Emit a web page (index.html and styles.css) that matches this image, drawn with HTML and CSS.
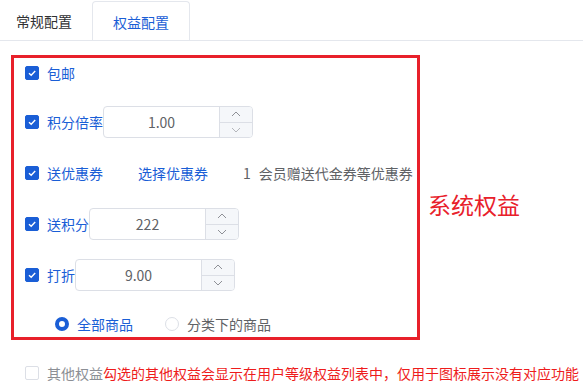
FILE: index.html
```html
<!DOCTYPE html>
<html lang="zh-CN">
<head>
<meta charset="utf-8">
<title>权益配置</title>
<link rel="stylesheet" href="styles.css">
</head>
<body>
<div class="tabs">
  <div class="tab">常规配置</div>
  <div class="tab active">权益配置</div>
</div>

<div class="main">
  <div class="sys-box">
    <div class="row row-first">
      <span class="cb checked"><svg viewBox="0 0 14 14" width="14" height="14"><path d="M4 7.2 L6.2 9.3 L10.2 5" fill="none" stroke="#fff" stroke-width="1.4"/></svg></span>
      <span class="lbl">包邮</span>
    </div>
    <div class="row">
      <span class="cb checked"><svg viewBox="0 0 14 14" width="14" height="14"><path d="M4 7.2 L6.2 9.3 L10.2 5" fill="none" stroke="#fff" stroke-width="1.4"/></svg></span>
      <span class="lbl">积分倍率</span>
      <div class="num">
        <span class="num-val">1.00</span>
        <span class="step">
          <span class="step-btn"><svg viewBox="0 0 10 6" width="10" height="6"><path d="M1 5 L5 1 L9 5" fill="none" stroke="#8e9096" stroke-width="1"/></svg></span>
          <span class="step-btn"><svg viewBox="0 0 10 6" width="10" height="6"><path d="M1 1 L5 5 L9 1" fill="none" stroke="#b4b6bb" stroke-width="1"/></svg></span>
        </span>
      </div>
    </div>
    <div class="row">
      <span class="cb checked"><svg viewBox="0 0 14 14" width="14" height="14"><path d="M4 7.2 L6.2 9.3 L10.2 5" fill="none" stroke="#fff" stroke-width="1.4"/></svg></span>
      <span class="lbl">送优惠券</span>
      <span class="link">选择优惠券</span>
      <span class="count">1</span>
      <span class="desc">会员赠送代金券等优惠券</span>
    </div>
    <div class="row">
      <span class="cb checked"><svg viewBox="0 0 14 14" width="14" height="14"><path d="M4 7.2 L6.2 9.3 L10.2 5" fill="none" stroke="#fff" stroke-width="1.4"/></svg></span>
      <span class="lbl">送积分</span>
      <div class="num">
        <span class="num-val">222</span>
        <span class="step">
          <span class="step-btn"><svg viewBox="0 0 10 6" width="10" height="6"><path d="M1 5 L5 1 L9 5" fill="none" stroke="#8e9096" stroke-width="1"/></svg></span>
          <span class="step-btn"><svg viewBox="0 0 10 6" width="10" height="6"><path d="M1 1 L5 5 L9 1" fill="none" stroke="#8e9096" stroke-width="1"/></svg></span>
        </span>
      </div>
    </div>
    <div class="row">
      <span class="cb checked"><svg viewBox="0 0 14 14" width="14" height="14"><path d="M4 7.2 L6.2 9.3 L10.2 5" fill="none" stroke="#fff" stroke-width="1.4"/></svg></span>
      <span class="lbl">打折</span>
      <div class="num num-wide">
        <span class="num-val">9.00</span>
        <span class="step">
          <span class="step-btn"><svg viewBox="0 0 10 6" width="10" height="6"><path d="M1 5 L5 1 L9 5" fill="none" stroke="#8e9096" stroke-width="1"/></svg></span>
          <span class="step-btn"><svg viewBox="0 0 10 6" width="10" height="6"><path d="M1 1 L5 5 L9 1" fill="none" stroke="#8e9096" stroke-width="1"/></svg></span>
        </span>
      </div>
    </div>
    <div class="row row-radio">
      <span class="radio on"></span>
      <span class="radio-lbl on-lbl">全部商品</span>
      <span class="radio"></span>
      <span class="radio-lbl">分类下的商品</span>
    </div>
  </div>
  <div class="note">系统权益</div>
</div>

<div class="row row-other">
  <span class="cb"></span>
  <span class="other-lbl">其他权益</span>
  <span class="warn">勾选的其他权益会显示在用户等级权益列表中，仅用于图标展示没有对应功能</span>
</div>
</body>
</html>
```

FILE: styles.css
```css
html, body {
  margin: 0;
  padding: 0;
  background: #fff;
  width: 583px;
  height: 384px;
  overflow: hidden;
}
body {
  font-family: "Noto Sans CJK SC", "Noto Sans", sans-serif;
  font-size: 14px;
  color: #606266;
}
.tabs {
  display: flex;
  padding-top: 1px;
  height: 39px;
  border-bottom: 1px solid #e4e7ed;
  margin-left: -4px;
}
.tab {
  height: 39px;
  line-height: 41px;
  padding: 0 20px;
  color: #303133;
  box-sizing: border-box;
}
.tab.active {
  color: #1a5ed6;
  border: 1px solid #e4e7ed;
  border-bottom: none;
  border-radius: 4px 4px 0 0;
}
.main {
  display: flex;
  align-items: flex-start;
  margin-top: 14px;
  margin-left: 11px;
}
.sys-box {
  width: 409px;
  height: 285px;
  box-sizing: border-box;
  border: 3px solid #e8202a;
  padding-left: 11px;
}
.note {
  margin-left: 8px;
  margin-top: 136px;
  font-size: 23px;
  line-height: 26px;
  color: #e8202a;
}
.row {
  display: flex;
  align-items: center;
  height: 32px;
  margin-top: 19px;
  white-space: nowrap;
}
.row-first {
  height: 29px;
  margin-top: 0;
}
.cb {
  width: 14px;
  height: 14px;
  box-sizing: border-box;
  border: 1px solid #dcdfe6;
  border-radius: 2px;
  background: #fff;
  flex: none;
  display: flex;
}
.cb.checked {
  background: #1a5ed6;
  border-color: #1a5ed6;
}
.cb svg {
  margin: -1px;
}
.lbl {
  margin-left: 8px;
  color: #1a5ed6;
  line-height: 20px;
}
.num {
  display: flex;
  width: 150px;
  height: 32px;
  box-sizing: border-box;
  border: 1px solid #dcdfe6;
  border-radius: 4px;
  overflow: hidden;
  flex: none;
}
.num-wide {
  width: 160px;
}
.num-val {
  flex: 1;
  text-align: center;
  line-height: 30px;
  color: #606266;
  font-size: 14px;
}
.step {
  width: 32px;
  display: flex;
  flex-direction: column;
  border-left: 1px solid #dcdfe6;
  background: #f5f7fa;
}
.step-btn {
  flex: 1;
  display: flex;
  align-items: center;
  justify-content: center;
}
.step-btn + .step-btn {
  border-top: 1px solid #dcdfe6;
}
.link {
  margin-left: 35px;
  color: #1a5ed6;
}
.count {
  margin-left: 35px;
  color: #606266;
}
.desc {
  margin-left: 8px;
  color: #606266;
}
.row-radio {
  height: 28px;
  padding-left: 30px;
}
.radio {
  width: 14px;
  height: 14px;
  box-sizing: border-box;
  border-radius: 50%;
  border: 1px solid #dcdfe6;
  background: #fff;
  flex: none;
}
.radio.on {
  border: 4.5px solid #1a5ed6;
  background: #fff;
}
.radio-lbl {
  margin-left: 8px;
  margin-right: 32px;
  color: #606266;
}
.on-lbl {
  color: #1a5ed6;
}
.row-other {
  height: 28px;
  margin-top: 19px;
  padding-left: 25px;
  overflow: hidden;
}
.other-lbl {
  margin-left: 8px;
  color: #8c8f95;
}
.warn {
  color: #ee1c1c;
}
```
